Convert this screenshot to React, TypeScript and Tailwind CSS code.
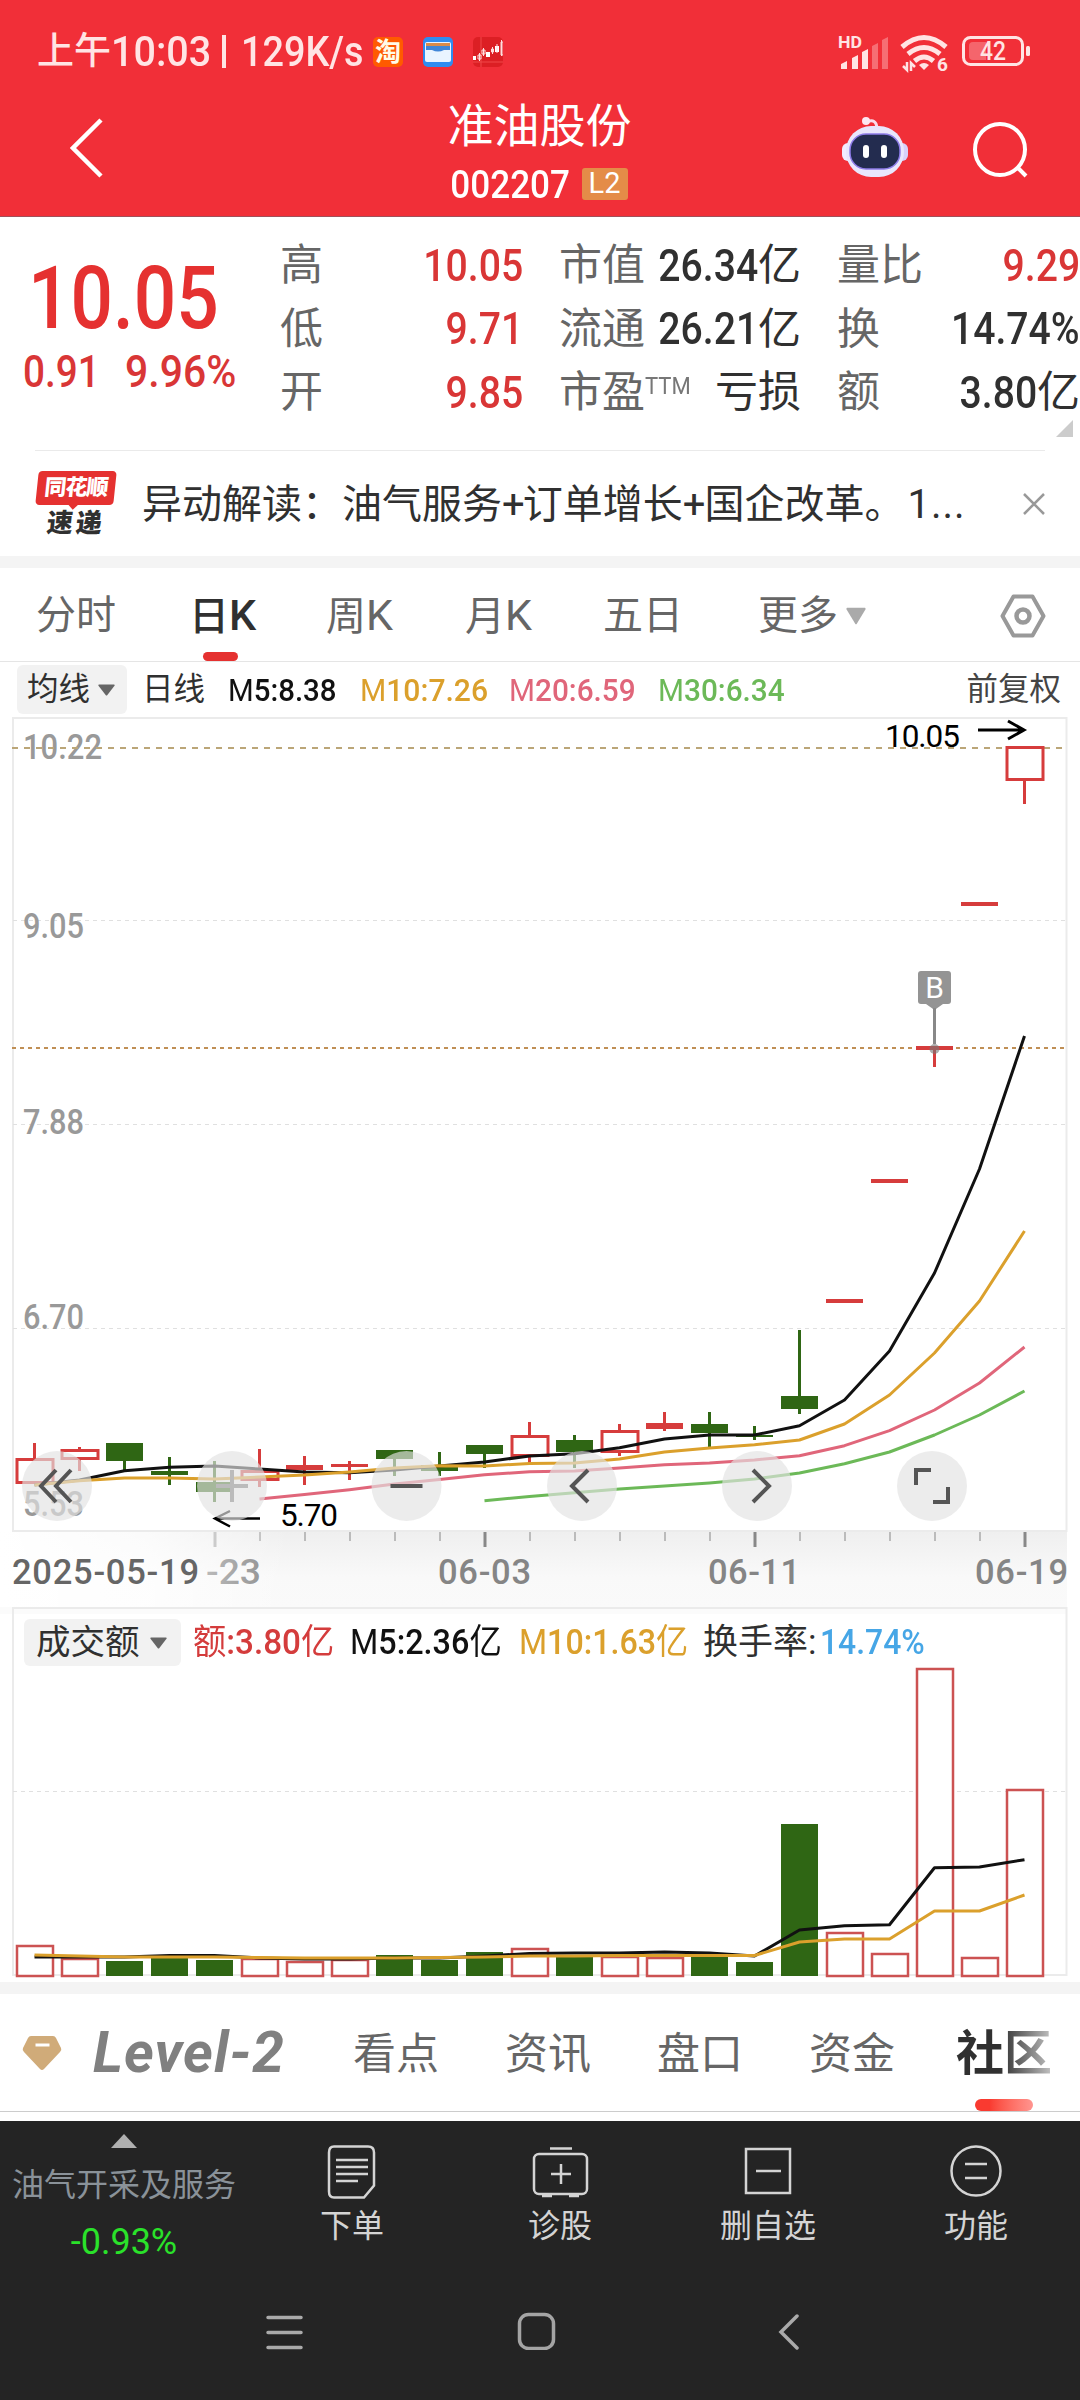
import type { ReactNode } from 'react';
import clsx from 'clsx';

const RED = '#d63c3c';
const GREEN = '#2f6614';
const COLORS = { m5: '#111111', m10: '#dba02c', m20: '#e0667a', m30: '#6cb958' };

// x of the candle with index i
const cx = (i: number) => 34.5 + i * 45;

type Kind = 'hollow' | 'red' | 'green';

// kind, body top, body bottom, wick top, wick bottom
const CANDLES: [Kind, number, number, number, number][] = [
    ['hollow', 1458, 1484, 1443, 1484],
    ['hollow', 1449, 1460, 1447, 1471],
    ['green', 1443, 1461, 1443, 1470],
    ['green', 1471, 1475, 1457, 1485],
    ['green', 1482, 1492, 1461, 1502],
    ['hollow', 1470, 1481, 1449, 1487],
    ['red', 1465, 1470, 1456, 1485],
    ['red', 1464, 1467, 1461, 1480],
    ['green', 1450, 1459, 1450, 1476],
    ['green', 1465, 1471, 1452, 1476],
    ['green', 1445, 1454, 1445, 1468],
    ['hollow', 1435, 1457, 1422, 1463],
    ['green', 1440, 1452, 1435, 1468],
    ['hollow', 1430, 1453, 1424, 1456],
    ['red', 1423, 1429, 1412, 1431],
    ['green', 1424, 1433, 1412, 1447],
    ['green', 1435, 1437, 1426, 1440],
    ['green', 1396, 1409, 1330, 1414],
    ['red', 1299, 1303, 1299, 1303],
    ['red', 1179, 1183, 1179, 1183],
    ['red', 1046, 1050, 1046, 1067],
    ['red', 902, 906, 902, 906],
    ['hollow', 746, 781, 781, 804],
];

const VOLUMES: [Kind, number][] = [
    ['hollow', 1945], ['hollow', 1958], ['green', 1961], ['green', 1958], ['green', 1960], ['hollow', 1958],
    ['hollow', 1961], ['hollow', 1959], ['green', 1955], ['green', 1960], ['green', 1952], ['hollow', 1948],
    ['green', 1956], ['hollow', 1956], ['hollow', 1957], ['green', 1957], ['green', 1962], ['green', 1824],
    ['hollow', 1932], ['hollow', 1953], ['hollow', 1668], ['hollow', 1957], ['hollow', 1789],
];

const MA5 = [1485, 1480, 1470.7, 1467.3, 1466, 1469, 1472, 1472.7, 1470, 1466, 1462, 1456, 1453.7, 1447.7, 1439, 1435, 1435, 1425.7, 1400, 1351, 1273, 1169, 1036];
const MA10 = [1485, 1480.7, 1478, 1478, 1479, 1477, 1475, 1472, 1468, 1465.7, 1466, 1463.5, 1463, 1459, 1452, 1448, 1444.7, 1440, 1424, 1395, 1353, 1301, 1231];
const MA20 = [1499, 1494.5, 1489.7, 1484, 1479.5, 1474.7, 1471.7, 1471, 1468, 1464.7, 1463, 1460, 1455.7, 1445.7, 1430.7, 1410, 1383, 1347];
const MA30 = [1500.7, 1496.5, 1492.7, 1489, 1486, 1483, 1479, 1473, 1463.7, 1452, 1435, 1415, 1391];
const VMA5 = [1957, 1957, 1957, 1955.5, 1955.5, 1958, 1959, 1959, 1958, 1958, 1956, 1953.5, 1953, 1953, 1952, 1953, 1956, 1930, 1925.7, 1924.7, 1867.7, 1867, 1859.7];
const VMA10 = [1955, 1956, 1957, 1957, 1957, 1957.5, 1958, 1958, 1958, 1957.5, 1957, 1956, 1956, 1955.5, 1955.5, 1955.5, 1955.5, 1942, 1939, 1939, 1911, 1911, 1895];

const Line = ({ data, from = 0, color }: { data: number[]; from?: number; color: string }) => (
    <polyline
        points={data.map((y, i) => `${cx(i + from)},${y}`).join(' ')}
        fill="none"
        stroke={color}
        strokeWidth="3"
        strokeLinejoin="round"
    />
);

const Num = ({ children, className }: { children: ReactNode; className?: string }) => (
    <span className={clsx('inline-block whitespace-nowrap font-medium', className)}>{children}</span>
);

const Caret = ({ className }: { className?: string }) => (
    <svg viewBox="0 0 20 14" preserveAspectRatio="none" className={className}>
        <path d="M1 0.5h18q1 .5.4 1.4L10.8 13q-.8 1-1.6 0L.6 1.900Q0 1 1 .5Z" fill="currentColor" />
    </svg>
);

const StatusBar = () => (
    <div className="flex h-[103px] items-center pl-[37px] pr-[49px] text-[#ffe4e4]">
        <div className="flex h-full shrink-0 items-center text-[37px] font-medium whitespace-nowrap">
            <span className="w-[74px]">上午</span>
            <span className="w-[104px] origin-left scale-x-[.94] text-[42px] font-medium">10:03</span>
            <span className="ml-[7px] h-[33px] w-[4px] bg-[#ffe4e4]" />
            <span className="ml-[15px] w-[124px] origin-left scale-x-[.9] text-[42px] font-medium">129K/s</span>
        </div>
        <div className="ml-[8px] flex items-center gap-[20px]">
            <span className="flex size-[30px] items-center justify-center rounded-[5px] bg-[#ff5a00] text-[26px] leading-none font-bold text-[#fffbe8]">淘</span>
            <svg viewBox="0 0 30 30" className="size-[30px]">
                <rect width="30" height="30" rx="5" fill="#2f8cf0" />
                <rect x="2" y="5" width="26" height="20" rx="2" fill="#e9f4ff" />
                <path d="M3 6h24v3H3z" fill="#d98b4a" />
                <path d="M3 9h24v4h-6q-6 3-12 0H3z" fill="#3f86d8" />
            </svg>
            <svg viewBox="0 0 30 30" className="size-[30px]">
                <rect width="30" height="30" rx="5" fill="#dc1f24" />
                <path d="M0 25h30M8 0v30" stroke="#f04848" />
                <path d="M0 19h3v4H0zM13 15h4v5h-4zM22 9h4v6h-4z" fill="#fff" />
                <path d="M5 18h3v4H5zM9 13h3v4H9zM18.500 12h2v3h-2zM28 5h2v13h-2zM6.500 16v8M10.500 11v8M19.500 10v7M24 7v9M28.500 3v16" fill="none" stroke="#ffdede" />
            </svg>
        </div>
        <svg viewBox="0 0 200 40" className="ml-auto h-[40px] w-[200px] shrink-0 overflow-visible">
            <g transform="translate(7 4)" fill="#ffe4e4">
                <text x="0" y="12" fontSize="16" fontWeight="700" textLength="24" lengthAdjust="spacingAndGlyphs">HD</text>
                <path d="M3 33v-5l6-3v8zM14 33V22l6-3v14zM24 33V16l6-3v20z" />
                <path d="M34 33V10l6-3v26zM44 33V4l6-3v32z" opacity=".35" />
                <g fill="none" stroke="#ffe4e4" strokeWidth="5">
                    <path d="M64 11q22-19 44 0" />
                    <path d="M70 18q16-13 32 0" />
                    <path d="M76.500 25q9.500-8 19 0" />
                </g>
                <path d="M81 29q5-4 10 0l-5 5z" />
                <path d="M69 26v8l-4-4M73 35v-8l4 4" fill="none" stroke="#ffe4e4" strokeWidth="2.500" />
                <text x="99" y="35" fontSize="19" fontWeight="700">6</text>
                <rect x="125.500" y="1.500" width="59" height="27" rx="7" fill="none" stroke="#ffe4e4" strokeWidth="3" />
                <path d="M135 6h13v18h-13q-4 0-4-4V10q0-4 4-4z" opacity=".3" />
                <rect x="188" y="10" width="4" height="10" rx="1.500" />
                <text x="142" y="24" fontSize="25" fontWeight="500" textLength="26" lengthAdjust="spacingAndGlyphs">42</text>
            </g>
        </svg>
    </div>
);

const Robot = () => (
    <svg viewBox="0 0 66 61" className="h-[61px] w-[66px]">
        <path d="M25 5q9-4 10 6" fill="none" stroke="#fbdcea" strokeWidth="3" />
        <circle cx="24" cy="4" r="4" fill="#fde8f2" />
        <rect x="0" y="26" width="12" height="18" rx="6" fill="#f1ecff" />
        <rect x="54" y="26" width="12" height="18" rx="6" fill="#d8d0fa" />
        <rect x="4" y="9" width="58" height="51" rx="25" fill="#e9e6fc" />
        <rect x="8" y="17" width="50" height="35" rx="16" fill="#232c4f" stroke="#8d7be8" strokeWidth="1.500" />
        <rect x="21" y="28" width="6" height="13" rx="3" fill="#fff" />
        <rect x="39" y="28" width="6" height="13" rx="3" fill="#fff" />
    </svg>
);

const Header = () => (
    <div className="flex h-[114px] items-start justify-between border-b border-[#a0505a] pr-[50px] pl-[70px]">
        <svg viewBox="0 0 34 62" className="mt-[14px] h-[62px] w-[34px]">
            <path d="M31 3 3 31l28 28" fill="none" stroke="#fff" strokeWidth="4.500" />
        </svg>
        <div className="ml-[133px] flex w-[280px] flex-col items-center text-white">
            <div className="h-[65px] text-[46px] leading-[46px]">准油股份</div>
            <div className="mr-[15px] flex h-[32px] items-center">
                <Num className="-mr-[5px] origin-right scale-x-[.9] pt-[2px] text-[39px]">002207</Num>
                <span className="ml-[17px] flex h-[32px] w-[46px] items-center justify-center rounded-[3px] bg-[#e48c48] text-[29px]">L2</span>
            </div>
        </div>
        <div className="flex gap-[64px]">
            <div className="mt-[14px]"><Robot /></div>
            <svg viewBox="0 0 58 58" className="mt-[19px] size-[58px]">
                <ellipse cx="28" cy="27.500" rx="25" ry="25.500" fill="none" stroke="#fff" strokeWidth="4" />
                <path d="m45 45 9 9" stroke="#fff" strokeWidth="4" />
            </svg>
        </div>
    </div>
);

type Quote = { label: string; sup?: string; num?: string; unit?: string; red?: boolean };

const QUOTES: Quote[][] = [
    [
        { label: '高', num: '10.05', red: true },
        { label: '低', num: '9.71', red: true },
        { label: '开', num: '9.85', red: true },
    ],
    [
        { label: '市值', num: '26.34', unit: '亿' },
        { label: '流通', num: '26.21', unit: '亿' },
        { label: '市盈', sup: 'TTM', unit: '亏损' },
    ],
    [
        { label: '量比', num: '9.29', red: true },
        { label: '换', num: '14.74%' },
        { label: '额', num: '3.80', unit: '亿' },
    ],
];

const QuoteRow = ({ label, sup, num, unit, red }: Quote) => (
    <div className="flex h-[63.500px] items-center text-[43px] leading-none">
        <span className="text-[#666]">{label}</span>
        {sup && <span className="mb-[14px] origin-left scale-x-[.92] text-[24px] text-[#777]">{sup}</span>}
        <span className={clsx('ml-auto flex items-center', red ? 'text-[#d93636]' : 'text-[#303030]')}>
            {num && <Num className="-ml-6 origin-right scale-x-[.89] text-[44px]">{num}</Num>}
            {unit}
        </span>
    </div>
);

const Quotes = () => (
    <div className="relative flex h-[233px] pt-[17px]">
        <div className="w-[280px] text-[#e53130]">
            <Num className="ml-[28px] h-[128px] origin-left scale-x-[.85] text-[88px] leading-[127px]">10.05</Num>
            <div className="-mt-[12px] flex text-[44px] leading-[44px] text-[#d93636]">
                <Num className="w-[103px] origin-left translate-x-[23px] scale-x-[.88]">0.91</Num>
                <Num className="origin-left translate-x-[22px] scale-x-[.93]">9.96%</Num>
            </div>
        </div>
        <div className="w-[243px]">{QUOTES[0].map((q) => <QuoteRow key={q.label} {...q} />)}</div>
        <div className="ml-[36px] w-[242px]">{QUOTES[1].map((q) => <QuoteRow key={q.label} {...q} />)}</div>
        <div className="ml-[36px] w-[243px]">{QUOTES[2].map((q) => <QuoteRow key={q.label} {...q} />)}</div>
        <svg viewBox="0 0 17 17" className="absolute right-[7px] bottom-[13px] size-[17px]">
            <path d="M17 0v17H0z" fill="#ccc" />
        </svg>
    </div>
);

const News = () => (
    <div className="mx-[35px] flex h-[106px] items-center border-t border-[#eaeaea]">
        <div className="flex w-[82px] flex-col items-center">
            <div className="relative flex h-[34px] w-[78px] -skew-x-6 items-center justify-center rounded-[4px] bg-[#e53130] text-[22px] leading-none font-black tracking-[-1px] text-white">
                同花顺
                <span className="absolute bottom-[-3px] left-[34px] size-[8px] rotate-45 bg-[#e53130]" />
            </div>
            <div className="mt-[5px] -skew-x-6 text-[26px] leading-[26px] font-black tracking-[3px] text-[#303030]">速递</div>
        </div>
        <div className="ml-[25px] w-[830px] pt-[3px] text-[40px] leading-none whitespace-nowrap text-[#303030]">
            异动解读：油气服务<span className="tracking-[-2px]">+</span>订单增长<span className="tracking-[-1px]">+</span>国企改革。<span className="ml-[3px] tracking-[1px]">1...</span>
        </div>
        <svg viewBox="0 0 22 22" className="ml-auto size-[22px]">
            <path d="m1 1 20 20M21 1 1 21" stroke="#999" strokeWidth="2.500" />
        </svg>
    </div>
);

const Periods = () => (
    <div className="relative flex h-[94px] items-center border-b border-[#e5e5e5] pt-[2px] pl-[36px] text-[40px] leading-none text-[#666]">
        <span className="w-[153px]">分时</span>
        <span className="w-[137px] font-medium text-[#303030]">日<span className="text-[43px]">K</span></span>
        <span className="w-[139px]">周<span className="text-[43px]">K</span></span>
        <span className="w-[138px]">月<span className="text-[43px]">K</span></span>
        <span className="w-[155px]">五日</span>
        <span>更多</span>
        <Caret className="ml-[8px] h-[18px] w-[20px] text-[#aaa]" />
        <svg viewBox="0 0 46 44" className="mr-[34px] ml-auto h-[44px] w-[46px]">
            <path d="M13.500 2.500h19L43.500 22l-11 19.500h-19L2.500 22z" fill="none" stroke="#999" strokeWidth="4" strokeLinejoin="round" />
            <circle cx="23" cy="22" r="6.500" fill="none" stroke="#999" strokeWidth="4.500" />
        </svg>
        <span className="absolute bottom-0 left-[203px] h-[9px] w-[35px] rounded-full bg-[#e53130]" />
    </div>
);

const Averages = () => (
    <div className="flex h-[53px] items-center pt-[2px] pl-[17px] text-[32px] leading-none">
        <span className="flex h-[49px] w-[110px] items-center rounded-[6px] bg-[#f2f2f2] pl-[10px] text-[31.500px] text-[#303030]">
            均线
            <Caret className="ml-[8px] h-[12px] w-[17px] text-[#666]" />
        </span>
        <span className="ml-[15px] w-[86px] text-[31.500px] text-[#303030]">日线</span>
        <Num className="w-[132px] origin-left scale-x-[.92] text-[#111]"><span className="font-normal">M</span>5:8.38</Num>
        <Num className="w-[149px] origin-left scale-x-[.94] text-[#dba02c]"><span className="font-normal">M</span>10:7.26</Num>
        <Num className="w-[149px] origin-left scale-x-[.93] text-[#e0667a]"><span className="font-normal">M</span>20:6.59</Num>
        <Num className="origin-left scale-x-[.93] text-[#6cb958]"><span className="font-normal">M</span>30:6.34</Num>
        <span className="mr-[19px] ml-auto pt-px text-[31.500px] text-[#444]">前复权</span>
    </div>
);

const ChartButton = ({ x, children }: { x: number; children: ReactNode }) => (
    <g transform={`translate(${x} 1486)`} fill="none" stroke="#555" strokeWidth="4">
        <circle r="35" fill="#e2e2e2" fillOpacity=".66" stroke="none" />
        {children}
    </g>
);

const PriceLabel = ({ y, children }: { y: number; children: string }) => (
    <text x="23" y={y} fontSize="35" fontWeight="500" fill="#999" textLength={children.length > 4 ? 79 : 61} lengthAdjust="spacingAndGlyphs">
        {children}
    </text>
);

const PriceChart = () => (
    <svg viewBox="0 715 1080 817" className="block h-[817px] w-full overflow-visible">
        <path d="M13 1531V718h1053.500v813z" fill="none" stroke="#ebebeb" strokeWidth="2" />
        <path d="M13 920.500h1052M13 1124.500h1052M13 1328.500h1052" stroke="#e0e0e0" strokeDasharray="4 4" />
        <PriceLabel y={759}>10.22</PriceLabel>
        <PriceLabel y={938}>9.05</PriceLabel>
        <PriceLabel y={1134}>7.88</PriceLabel>
        <PriceLabel y={1329}>6.70</PriceLabel>
        <PriceLabel y={1516}>5.53</PriceLabel>
        <path d="M12 748h1052" stroke="#bba678" strokeWidth="2" strokeDasharray="6 6" />
        <path d="M12 1048h1052" stroke="#c08f55" strokeWidth="2" strokeDasharray="4 4" />

        <rect x="918" y="971" width="33" height="33" rx="3" fill="#949494" />
        <path d="m926 1004 8.500 6 8.500-6z" fill="#949494" />
        <path d="M934.500 1008v36" stroke="#888" strokeWidth="3" />
        <text x="934.500" y="998" fontSize="30" fill="#fff" textAnchor="middle">B</text>

        {CANDLES.map(([kind, top, bottom, high, low], i) => {
            const color = kind === 'green' ? GREEN : RED;
            return (
                <g key={i} stroke={color} strokeWidth="3">
                    {high < top && <path d={`M${cx(i)} ${high}V${top}`} />}
                    {low > bottom && <path d={`M${cx(i)} ${bottom}V${low}`} />}
                    {kind === 'hollow' ? (
                        <rect x={cx(i) - 17.5} y={top + 1.5} width="36" height={bottom - top - 3} fill="#fff" />
                    ) : (
                        <rect x={cx(i) - 18.5} y={top} width="37" height={bottom - top} fill={color} stroke="none" />
                    )}
                </g>
            );
        })}
        <circle cx="934.500" cy="1049" r="5" fill="#777" fillOpacity=".6" />

        <Line data={MA5} color={COLORS.m5} />
        <Line data={MA10} color={COLORS.m10} />
        <Line data={MA20} from={5} color={COLORS.m20} />
        <Line data={MA30} from={10} color={COLORS.m30} />

        <text x="885" y="747" fontSize="31.500" textLength="75">10.05</text>
        <path d="M978 730h46M1008 721l16 9-16 9" fill="none" stroke="#000" strokeWidth="3" />
        <text x="280" y="1526" fontSize="31.500" textLength="58">5.70</text>
        <path d="M260 1518.500h-45M230 1511l-15 7.500 15 8" fill="none" stroke="#000" strokeWidth="2.500" />

        <ChartButton x={57}><path d="M-1-16-16 0-1 16M14-16-1 0l15 16" /></ChartButton>
        <ChartButton x={232}><path d="M-16 0h32M0-16v32" stroke="#bbb" /></ChartButton>
        <ChartButton x={406.5}><path d="M-16 0h32" /></ChartButton>
        <ChartButton x={582}><path d="M6-16-10 0 6 16" /></ChartButton>
        <ChartButton x={757}><path d="M-4-16 12 0-4 16" /></ChartButton>
        <ChartButton x={932}><path d="M-1-16h-15v15M16 1v15H1" /></ChartButton>
    </svg>
);

const DateAxis = () => (
    <svg viewBox="0 1532 1080 75" className="block h-[75px] w-full">
        <defs>
            <linearGradient id="axis" x2="0" y2="1">
                <stop stopColor="#efefef" />
                <stop offset=".6" stopColor="#f9f9f9" />
                <stop offset="1" stopColor="#fafafa" />
            </linearGradient>
            <linearGradient id="fade">
                <stop stopColor="#fff" />
                <stop offset=".5" stopColor="#fff" stopOpacity=".75" />
                <stop offset="1" stopColor="#fff" stopOpacity="0" />
            </linearGradient>
        </defs>
        <path d="M0 1532h1067v75H0z" fill="url(#axis)" />
        {Array.from({ length: 18 }, (_, k) => k + 5).map((i) => {
            const major = i === 10 || i === 16 || i === 22;
            return <path key={i} d={`M${cx(i) + 0.5} 1532v${major ? 15 : 9}`} stroke={major ? '#888' : '#bbb'} strokeWidth={major ? 3 : 2} />;
        })}
        <path d="M215 1532v15" stroke="#aaa" strokeWidth="3" />
        <g fontSize="34.500" fontWeight="500" fill="#858585">
            <text x="206" y="1584" textLength="55" lengthAdjust="spacingAndGlyphs">-23</text>
            <text x="438" y="1584" textLength="93">06-03</text>
            <text x="708" y="1584" textLength="92">06-11</text>
            <text x="975" y="1584" textLength="93">06-19</text>
        </g>
        <path d="M0 1532h290v75H0z" fill="url(#fade)" />
        <text x="12" y="1584" fontSize="34.500" fontWeight="500" fill="#666" textLength="187">2025-05-19</text>
    </svg>
);

const VolumeLegend = () => (
    <div className="absolute top-[12px] left-[24px] flex h-[47px] items-center text-[34px] leading-none whitespace-nowrap">
        <span className="flex h-full w-[157px] items-center rounded-[6px] bg-[#f2f2f2] pl-[12px] text-[34.500px] text-[#303030]">
            成交额
            <Caret className="ml-[10px] h-[12px] w-[17px] text-[#666]" />
        </span>
        <Num className="ml-[12px] w-[157px] origin-left scale-x-[.95] text-[35px] text-[#d43c3c]"><span className="font-normal">额</span>:3.80<span className="font-normal">亿</span></Num>
        <Num className="w-[169px] origin-left scale-x-[.925] text-[35px] text-[#111]"><span className="font-normal">M</span>5:2.36<span className="font-normal">亿</span></Num>
        <Num className="w-[184px] origin-left scale-x-[.92] text-[35px] text-[#dba02c]"><span className="font-normal">M</span>10:1.63<span className="font-normal">亿</span></Num>
        <span className="w-[117px] text-[35px] text-[#303030]">换手率:</span>
        <Num className="origin-left scale-x-[.91] text-[35px] text-[#46a6e6]">14.74%</Num>
    </div>
);

const VolumeChart = () => (
    <div className="relative">
        <svg viewBox="0 1607 1080 375" className="block h-[375px] w-full">
            <path d="M0 1607h1067v7H0z" fill="#fbfbfb" />
            <path d="M13 1975V1608h1053.500v367z" fill="none" stroke="#ebebeb" strokeWidth="2" />
            <path d="M13 1791.500h1052" stroke="#e0e0e0" strokeDasharray="4 4" />
            {VOLUMES.map(([kind, top], i) =>
                kind === 'hollow' ? (
                    <rect key={i} x={cx(i) - 17.5} y={top + 1} width="36" height={1975 - top} fill="#fff" stroke="#cc5252" strokeWidth="2.500" />
                ) : (
                    <rect key={i} x={cx(i) - 18.5} y={top} width="37" height={1976 - top} fill={GREEN} />
                )
            )}
            <Line data={VMA5} color={COLORS.m5} />
            <Line data={VMA10} color={COLORS.m10} />
        </svg>
        <VolumeLegend />
    </div>
);

const Sections = () => (
    <div className="relative flex h-[118px] items-center border-b border-[#ccc] pt-[3px] pl-[22px] text-[43px] leading-none whitespace-nowrap text-[#666]">
        <svg viewBox="0 0 40 36" className="mb-[3px] h-[36px] w-[40px]">
            <path d="M9 1h22q2 0 3 2l5 10q1 2-1 4L22 34q-2 2-4 0L2 17q-2-2-1-4L6 3q1-2 3-2z" fill="#d0ab79" />
            <path d="M13.500 10h14" stroke="#fff" strokeWidth="3" />
        </svg>
        <span className="mb-[3px] ml-[31px] w-[260px] text-[57px] font-bold tracking-[1px] text-[#808080] italic">Level-2</span>
        <span className="w-[152px]">看点</span>
        <span className="w-[152px]">资讯</span>
        <span className="w-[152px]">盘口</span>
        <span className="w-[147px]">资金</span>
        <span className="bg-linear-to-r from-[#303030] from-45% to-[#c4c4c4] bg-clip-text py-2 text-[48px] font-bold text-transparent">社区</span>
        <span className="absolute right-[47px] bottom-0 h-[12px] w-[58px] rounded-full bg-linear-to-r from-[#f93a30] from-25% to-[#ff9590]" />
    </div>
);

const ACTIONS = [
    {
        label: '下单',
        icon: (
            <>
                <path d="M8 5.500h34q6 0 6 6v33l-10 12H8q-5 0-5-6v-39q0-6 5-6z" />
                <path d="M10 19h32M10 26h32M10 33h32M10 40h22" />
            </>
        ),
    },
    {
        label: '诊股',
        icon: (
            <>
                <rect x="0" y="13" width="53" height="40" rx="5" />
                <path d="M16 7.500h22M27 23v20M17 33h20M8 55h10M35 55h10" />
            </>
        ),
    },
    { label: '删自选', icon: <path d="M4 8h44v44H4zM14 30h25" /> },
    {
        label: '功能',
        icon: (
            <>
                <circle cx="26" cy="30" r="24.500" />
                <path d="M15 23h22M15 37h22" />
            </>
        ),
    },
];

const ActionBar = () => (
    <div className="flex h-[163px] text-[#d4d4d4]">
        <div className="flex w-[248px] flex-col items-center pt-[13px]">
            <svg viewBox="0 0 26 14" className="h-[14px] w-[26px]"><path d="M13 0l13 14H0z" fill="#b0b0b0" /></svg>
            <span className="mt-[21px] text-[32px] leading-[32px] text-[#8a9299]">油气开采及服务</span>
            <span className="mt-[24px] text-[36px] leading-[35px] text-[#2ae22a]">-0.93%</span>
        </div>
        {ACTIONS.map(({ label, icon }) => (
            <div key={label} className="flex w-[208px] flex-col items-center pt-[20px]">
                <svg viewBox="0 0 52 60" className="h-[60px] w-[52px] overflow-visible" fill="none" stroke="currentColor" strokeWidth="2.500">
                    {icon}
                </svg>
                <span className="mt-[9px] text-[32px] leading-[32px]">{label}</span>
            </div>
        ))}
    </div>
);

const SystemNav = () => (
    <div className="flex h-[116px] pt-[28px] pl-[265px]">
        <svg viewBox="0 0 39 38" className="h-[38px] w-[39px]">
            <path d="M3 5.500h33M3 20.500h33M3 35.500h33" stroke="#aaa" strokeWidth="3.500" strokeLinecap="round" />
        </svg>
        <svg viewBox="0 0 39 38" className="ml-[213px] h-[38px] w-[39px]">
            <rect x="2.500" y="2.500" width="34" height="34" rx="9" fill="none" stroke="#a4a4a4" strokeWidth="3.500" />
        </svg>
        <svg viewBox="0 0 22 38" className="ml-[222px] h-[38px] w-[22px]">
            <path d="M19 4 3 20l16 16" fill="none" stroke="#aaa" strokeWidth="3.500" strokeLinecap="round" />
        </svg>
    </div>
);

const App = () => (
    <div className="flex h-[2400px] w-[1080px] flex-col overflow-hidden bg-white font-[Roboto,'Noto_Sans_CJK_SC',sans-serif]">
        <div className="bg-[#f12f38]">
            <StatusBar />
            <Header />
        </div>
        <Quotes />
        <News />
        <div className="h-[12px] bg-[#f4f4f4]" />
        <Periods />
        <Averages />
        <PriceChart />
        <DateAxis />
        <VolumeChart />
        <div className="h-[12px] bg-[#f4f4f4]" />
        <Sections />
        <div className="mt-[9px] flex-1 bg-[#242424]">
            <ActionBar />
            <SystemNav />
        </div>
    </div>
);

export default App;
